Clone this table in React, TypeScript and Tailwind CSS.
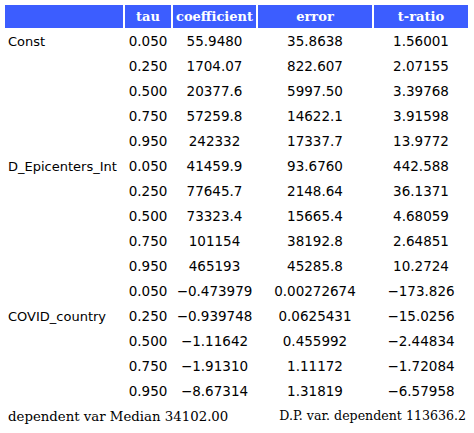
import React from "react";

type Row = { name?: string; tau: string; coef: string; err: string; t: string };

const rows: Row[] = [
  { name: "Const", tau: "0.050", coef: "55.9480", err: "35.8638", t: "1.56001" },
  { tau: "0.250", coef: "1704.07", err: "822.607", t: "2.07155" },
  { tau: "0.500", coef: "20377.6", err: "5997.50", t: "3.39768" },
  { tau: "0.750", coef: "57259.8", err: "14622.1", t: "3.91598" },
  { tau: "0.950", coef: "242332", err: "17337.7", t: "13.9772" },
  { name: "D_Epicenters_Int", tau: "0.050", coef: "41459.9", err: "93.6760", t: "442.588" },
  { tau: "0.250", coef: "77645.7", err: "2148.64", t: "36.1371" },
  { tau: "0.500", coef: "73323.4", err: "15665.4", t: "4.68059" },
  { tau: "0.750", coef: "101154", err: "38192.8", t: "2.64851" },
  { tau: "0.950", coef: "465193", err: "45285.8", t: "10.2724" },
  { tau: "0.050", coef: "\u22120.473979", err: "0.00272674", t: "\u2212173.826" },
  { name: "COVID_country", tau: "0.250", coef: "\u22120.939748", err: "0.0625431", t: "\u221215.0256" },
  { tau: "0.500", coef: "\u22121.11642", err: "0.455992", t: "\u22122.44834" },
  { tau: "0.750", coef: "\u22121.91310", err: "1.11172", t: "\u22121.72084" },
  { tau: "0.950", coef: "\u22128.67314", err: "1.31819", t: "\u22126.57958" },
];

const sans = "font-['DejaVu_Sans',sans-serif]";
const serif = "font-['DejaVu_Serif',serif]";

export default function App() {
  const head = `bg-[#3c5dff] text-white font-bold ${serif} text-[13px] flex items-center justify-center`;
  const cell = "flex items-center justify-center";
  return (
    <div className="w-[474px] h-[433px] bg-white text-black p-[5px]">
      <div className={`grid grid-cols-[118px_46px_83px_114px_94px] auto-rows-[23px] gap-[2px] ${sans} text-[13.5px]`}>
        <div className="bg-[#3c5dff]" />
        <div className={head}>tau</div>
        <div className={head}>coefficient</div>
        <div className={head}>error</div>
        <div className={head}>t-ratio</div>
        {rows.map((r, i) => (
          <React.Fragment key={i}>
            <div className="flex items-center pl-[3px] whitespace-nowrap text-[13px]">{r.name ?? ""}</div>
            <div className={cell}>{r.tau}</div>
            <div className={cell}>{r.coef}</div>
            <div className={cell}>{r.err}</div>
            <div className={cell}>{r.t}</div>
          </React.Fragment>
        ))}
        <div className={`col-span-3 flex items-center pl-[3px] whitespace-nowrap ${serif} text-[13.3px]`}>
          dependent var Median 34102.00
        </div>
        <div className={`col-span-2 flex items-center justify-end pr-[2px] whitespace-nowrap ${serif} text-[12.6px]`}>
          D.P. var. dependent 113636.2
        </div>
      </div>
    </div>
  );
}
